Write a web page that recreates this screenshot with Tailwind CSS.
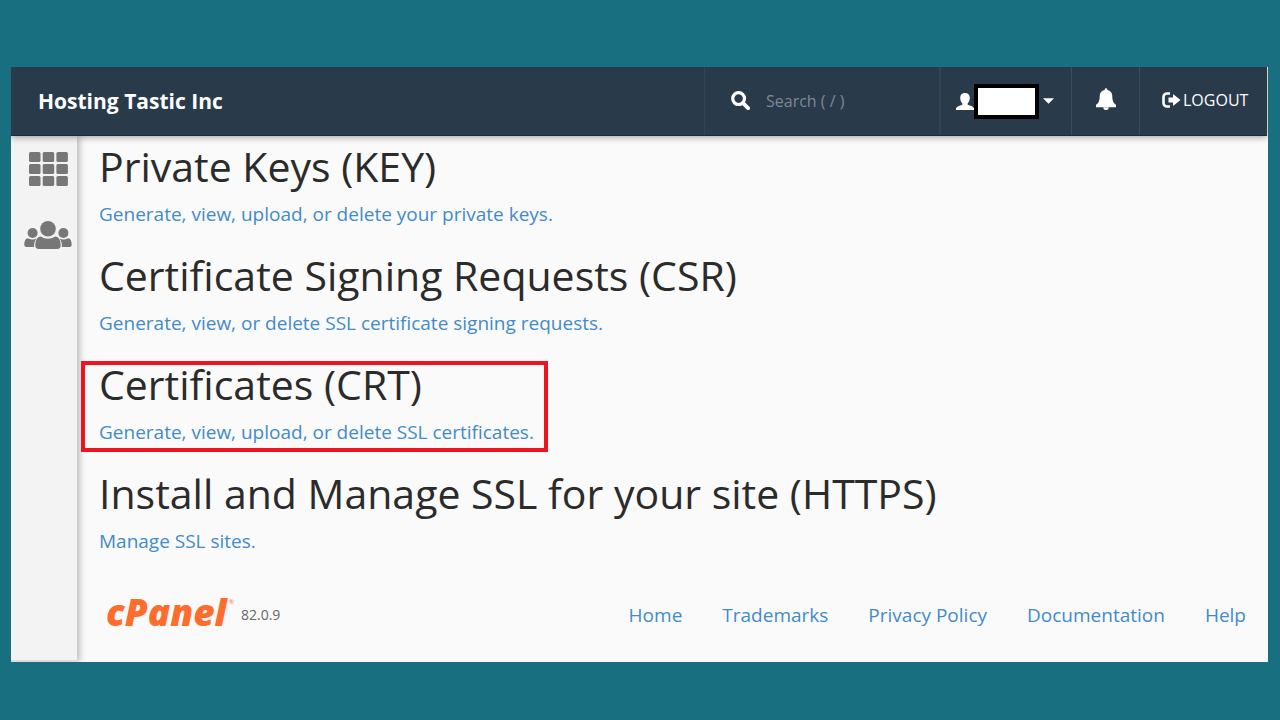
<!DOCTYPE html>
<html lang="en">
<head>
<meta charset="utf-8">
<meta name="viewport" content="width=device-width, initial-scale=1">
<title>SSL/TLS</title>
<script src="https://cdn.jsdelivr.net/npm/@tailwindcss/browser@4"></script>
</head>
<body class="flex min-h-screen flex-col bg-[#186f80] pt-[67px] pr-3 pb-[58px] pl-[11px] font-['Open_Sans',sans-serif] text-[#2b2b2b]">
<div class="flex grow flex-col overflow-hidden bg-[#fafafa]">
  <header class="relative z-10 mr-px flex h-[69px] items-stretch border-b border-[#1c2b3c] bg-[#293a4a] text-white shadow-[0_1px_7px_rgba(0,0,0,0.4)]">
    <a href="#" class="flex grow items-center pt-px pl-[27px] text-[21px] font-bold">Hosting Tastic Inc</a>
    <label class="flex w-[235px] items-center gap-4 border-l border-[#324454] pl-[26px]">
      <svg class="-mt-px size-[19px] shrink-0" viewBox="0 0 20 20" fill="none" stroke="currentColor" aria-hidden="true"><circle cx="8" cy="8" r="6.2" stroke-width="3.4"/><path d="M12.7 12.7 18 18" stroke-width="4" stroke-linecap="round"/></svg>
      <input type="search" placeholder="Search ( / )" aria-label="Search" class="min-w-0 grow bg-transparent text-base text-white outline-none placeholder:text-[#7f8890]">
    </label>
    <button type="button" aria-label="User menu" class="flex w-[132px] items-center border-l-2 border-[#324454] pl-[15px]">
      <svg class="h-[17px] w-[18px]" viewBox="0 0 18 18" preserveAspectRatio="none" fill="currentColor" aria-hidden="true"><path d="M9 0c3 0 4.800 2 4.800 5 0 2.500-.8 4.600-2.100 5.900v1.600c2.800 1 5.800 2 6.300 3.700V18H0v-1.800c.5-1.700 3.500-2.700 6.300-3.700v-1.600C5 9.600 4.200 7.500 4.200 5c0-3 1.800-5 4.800-5z"/></svg>
      <span class="h-[35px] w-[65px] border-4 border-black bg-white"></span>
      <svg class="ml-1 h-[6px] w-[11px]" viewBox="0 0 12 6" fill="currentColor" aria-hidden="true"><path d="M0 0h12L6 6z"/></svg>
    </button>
    <button type="button" aria-label="Notifications" class="flex w-[68px] items-center justify-center border-l border-[#3a4b5b]">
      <svg class="-mt-1 h-[22px] w-5" viewBox="0 0 20 22" fill="currentColor" aria-hidden="true"><path d="M8.700 1.500a1.300 1.300 0 0 1 2.600 0v.6c3.200.6 5 3 5 6 0 5 1.300 7.300 3.700 8.700v2.400H0v-2.400c2.400-1.400 3.700-3.700 3.700-8.700 0-3 1.800-5.400 5-6zM7.300 19.500h5.400a2.700 2.500 0 0 1-5.400 0z"/></svg>
    </button>
    <a href="#" class="flex w-32 items-center gap-[2px] border-l border-[#3a4b5b] pb-[2px] pl-[22px] text-base">
      <svg class="h-4 w-[19px]" viewBox="0 0 19 16" aria-hidden="true"><path d="M8 1.500H5A3.500 3.500 0 0 0 1.500 5v6A3.500 3.500 0 0 0 5 14.500h3" fill="none" stroke="currentColor" stroke-width="2.600"/><path d="M6.500 5.400H11V2l7.500 6L11 14v-3.400H6.500z" fill="currentColor"/></svg>
      LOGOUT
    </a>
  </header>
  <div class="flex grow">
    <nav class="flex w-[66px] shrink-0 flex-col items-center border-b-2 border-[#dcdcdc] bg-[#f3f3f3] pt-4 pl-2 shadow-[2px_0_7px_rgba(0,0,0,0.3)]">
      <a href="#" aria-label="Home" class="text-[#777]">
        <svg class="h-[34px] w-[39px]" viewBox="0 0 39 34" fill="currentColor" aria-hidden="true"><rect width="11.500" height="10" rx="1.500"/><rect x="13.700" width="11.500" height="10" rx="1.500"/><rect x="27.400" width="11.500" height="10" rx="1.500"/><rect y="12" width="11.500" height="10" rx="1.500"/><rect x="13.700" y="12" width="11.500" height="10" rx="1.500"/><rect x="27.400" y="12" width="11.500" height="10" rx="1.500"/><rect y="24" width="11.500" height="10" rx="1.500"/><rect x="13.700" y="24" width="11.500" height="10" rx="1.500"/><rect x="27.400" y="24" width="11.500" height="10" rx="1.500"/></svg>
      </a>
      <a href="#" aria-label="User manager" class="mt-[35px] text-[#777]">
        <svg class="h-7 w-12" viewBox="0 0 48 28" fill="currentColor" aria-hidden="true"><circle cx="24" cy="7.800" r="7.800"/><circle cx="8.600" cy="12" r="5"/><circle cx="39.400" cy="12" r="5"/><path d="M17 15.500c4 3 10 3 14 0 4 0 5.700 4 5.700 9 0 2.300-1.200 3.500-3.500 3.500H14.800c-2.300 0-3.500-1.200-3.500-3.500 0-5 1.700-9 5.700-9zM4 17.300c3 1.700 6 1.700 8.500.3-1.800 2-2.500 5-2.500 8.400H2.500C1 26 .3 25 .3 23.500c0-3 1-6.200 3.700-6.200zM44 17.300c-3 1.700-6 1.700-8.500.3 1.800 2 2.500 5 2.500 8.400h7.500c1.500 0 2.200-1 2.200-2.500 0-3-1-6.200-3.700-6.200z"/></svg>
      </a>
    </nav>
    <div class="flex grow flex-col pl-[22px]">
      <main>
        <section class="h-[109px] pt-[6px]">
          <h2 class="text-[41px] leading-[48px]">Private Keys (KEY)</h2>
          <a href="#" class="mt-[9px] inline-block text-[19px] leading-[30px] text-[#428bca]">Generate, view, upload, or delete your private keys.</a>
        </section>
        <section class="h-[109px] pt-[6px]">
          <h2 class="text-[41px] leading-[48px]">Certificate Signing Requests (CSR)</h2>
          <a href="#" class="mt-[9px] inline-block text-[19px] leading-[30px] text-[#428bca]">Generate, view, or delete SSL certificate signing requests.</a>
        </section>
        <section class="relative h-[109px] pt-[6px]">
          <span class="pointer-events-none absolute top-[7px] -left-[18px] h-[91px] w-[467px] border-4 border-[#ee1520]"></span>
          <h2 class="text-[41px] leading-[48px]">Certificates (CRT)</h2>
          <a href="#" class="mt-[9px] inline-block text-[19px] leading-[30px] text-[#428bca]">Generate, view, upload, or delete SSL certificates.</a>
        </section>
        <section class="h-[109px] pt-[6px]">
          <h2 class="text-[41px] leading-[48px]">Install and Manage SSL for your site (HTTPS)</h2>
          <a href="#" class="mt-[9px] inline-block text-[19px] leading-[30px] text-[#428bca]">Manage SSL sites.</a>
        </section>
      </main>
      <footer class="flex items-center pt-[14px] pr-[22px] pl-[7px]">
        <a href="#" aria-label="cPanel">
          <svg class="h-[54px] w-[135px]" viewBox="0 0 135 54" fill="#ff6c2c" aria-hidden="true"><text x="0" y="40" font-family="Open Sans, sans-serif" font-size="37" font-weight="800" font-style="italic">cPanel</text><text x="123" y="18" font-family="Open Sans, sans-serif" font-size="6">®</text></svg>
        </a>
        <span class="pt-1 text-sm text-[#666]">82.0.9</span>
        <ul class="ml-auto flex gap-10 pt-1 text-[19px] leading-[30px] text-[#428bca]">
          <li><a href="#">Home</a></li>
          <li><a href="#">Trademarks</a></li>
          <li><a href="#">Privacy Policy</a></li>
          <li><a href="#">Documentation</a></li>
          <li><a href="#">Help</a></li>
        </ul>
      </footer>
    </div>
  </div>
</div>
</body>
</html>
